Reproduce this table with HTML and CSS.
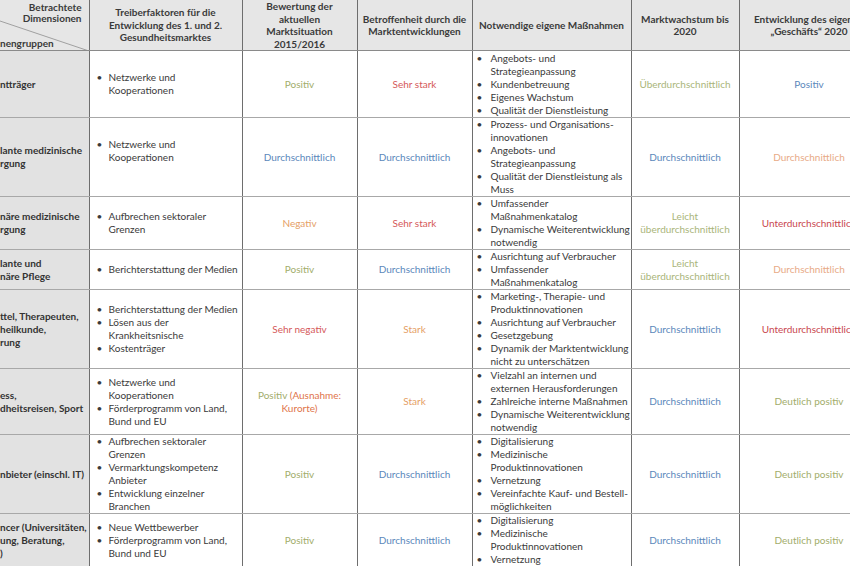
FILE: index.html
```html
<!DOCTYPE html>
<html lang="de">
<head>
<meta charset="utf-8">
<title>Marktanalyse Gesundheitsmarkt</title>
<link rel="stylesheet" href="styles.css">
</head>
<body>
<table class="matrix">
  <colgroup>
    <col class="c1"><col class="c2"><col class="c3"><col class="c4"><col class="c5"><col class="c6"><col class="c7">
  </colgroup>
  <thead>
    <tr class="head">
      <th class="corner">
        <div class="corner-box">
          <svg class="diag" width="89" height="50" viewBox="0 0 89 50"><line x1="0" y1="20" x2="89" y2="50" stroke="#a0a0a0" stroke-width="1"/></svg>
          <span class="dim">Betrachtete<br>Dimensionen</span>
          <span class="grp">nengruppen</span>
        </div>
      </th>
      <th>Treiberfaktoren für die<br>Entwicklung des 1. und 2.<br>Gesundheitsmarktes</th>
      <th>Bewertung der<br>aktuellen<br>Marktsituation<br>2015/2016</th>
      <th>Betroffenheit durch die<br>Marktentwicklungen</th>
      <th>Notwendige eigene Maßnahmen</th>
      <th>Marktwachstum bis<br>2020</th>
      <th class="last">Entwicklung des eigenen<br>„Geschäfts“ 2020</th>
    </tr>
  </thead>
  <tbody>
    <tr class="r1">
      <th class="grp-cell">ntträger</th>
      <td class="drv"><ul><li>Netzwerke und<br>Kooperationen</li></ul></td>
      <td class="val green">Positiv</td>
      <td class="val red">Sehr stark</td>
      <td class="act"><ul><li>Angebots- und<br>Strategieanpassung</li><li>Kundenbetreuung</li><li>Eigenes Wachstum</li><li>Qualität der Dienstleistung</li></ul></td>
      <td class="val lgreen">Überdurchschnittlich</td>
      <td class="val blue">Positiv</td>
    </tr>
    <tr class="r2">
      <th class="grp-cell">lante medizinische<br>rgung</th>
      <td class="drv raised"><ul><li>Netzwerke und<br>Kooperationen</li></ul></td>
      <td class="val blue">Durchschnittlich</td>
      <td class="val blue">Durchschnittlich</td>
      <td class="act"><ul><li>Prozess- und Organisations-<br>innovationen</li><li>Angebots- und<br>Strategieanpassung</li><li>Qualität der Dienstleistung als<br>Muss</li></ul></td>
      <td class="val blue">Durchschnittlich</td>
      <td class="val peach">Durchschnittlich</td>
    </tr>
    <tr class="r3">
      <th class="grp-cell">näre medizinische<br>rgung</th>
      <td class="drv"><ul><li>Aufbrechen sektoraler<br>Grenzen</li></ul></td>
      <td class="val orange">Negativ</td>
      <td class="val red">Sehr stark</td>
      <td class="act"><ul><li>Umfassender<br>Maßnahmenkatalog</li><li>Dynamische Weiterentwicklung<br>notwendig</li></ul></td>
      <td class="val lgreen">Leicht<br>überdurchschnittlich</td>
      <td class="val dred">Unterdurchschnittlich</td>
    </tr>
    <tr class="r4">
      <th class="grp-cell">lante und<br>näre Pflege</th>
      <td class="drv"><ul><li>Berichterstattung der Medien</li></ul></td>
      <td class="val green">Positiv</td>
      <td class="val blue">Durchschnittlich</td>
      <td class="act"><ul><li>Ausrichtung auf Verbraucher</li><li>Umfassender<br>Maßnahmenkatalog</li></ul></td>
      <td class="val lgreen">Leicht<br>überdurchschnittlich</td>
      <td class="val peach">Durchschnittlich</td>
    </tr>
    <tr class="r5">
      <th class="grp-cell">ttel, Therapeuten,<br>heilkunde,<br>rung</th>
      <td class="drv"><ul><li>Berichterstattung der Medien</li><li>Lösen aus der<br>Krankheitsnische</li><li>Kostenträger</li></ul></td>
      <td class="val red">Sehr negativ</td>
      <td class="val orange">Stark</td>
      <td class="act"><ul><li>Marketing-, Therapie- und<br>Produktinnovationen</li><li>Ausrichtung auf Verbraucher</li><li>Gesetzgebung</li><li>Dynamik der Marktentwicklung<br>nicht zu unterschätzen</li></ul></td>
      <td class="val blue">Durchschnittlich</td>
      <td class="val dred">Unterdurchschnittlich</td>
    </tr>
    <tr class="r6">
      <th class="grp-cell">ess,<br>dheitsreisen, Sport</th>
      <td class="drv"><ul><li>Netzwerke und<br>Kooperationen</li><li>Förderprogramm von Land,<br>Bund und EU</li></ul></td>
      <td class="val"><span class="green">Positiv</span> <span class="rust">(Ausnahme:<br>Kurorte)</span></td>
      <td class="val orange">Stark</td>
      <td class="act"><ul><li>Vielzahl an internen und<br>externen Herausforderungen</li><li>Zahlreiche interne Maßnahmen</li><li>Dynamische Weiterentwicklung<br>notwendig</li></ul></td>
      <td class="val blue">Durchschnittlich</td>
      <td class="val green">Deutlich positiv</td>
    </tr>
    <tr class="r7">
      <th class="grp-cell">nbieter (einschl. IT)</th>
      <td class="drv"><ul><li>Aufbrechen sektoraler<br>Grenzen</li><li>Vermarktungskompetenz<br>Anbieter</li><li>Entwicklung einzelner<br>Branchen</li></ul></td>
      <td class="val green">Positiv</td>
      <td class="val blue">Durchschnittlich</td>
      <td class="act"><ul><li>Digitalisierung</li><li>Medizinische<br>Produktinnovationen</li><li>Vernetzung</li><li>Vereinfachte Kauf- und Bestell-<br>möglichkeiten</li></ul></td>
      <td class="val blue">Durchschnittlich</td>
      <td class="val green">Deutlich positiv</td>
    </tr>
    <tr class="r8">
      <th class="grp-cell">ncer (Universitäten,<br>ung, Beratung,<br>)</th>
      <td class="drv"><ul><li>Neue Wettbewerber</li><li>Förderprogramm von Land,<br>Bund und EU</li></ul></td>
      <td class="val green">Positiv</td>
      <td class="val blue">Durchschnittlich</td>
      <td class="act"><ul><li>Digitalisierung</li><li>Medizinische<br>Produktinnovationen</li><li>Vernetzung</li></ul></td>
      <td class="val blue">Durchschnittlich</td>
      <td class="val green">Deutlich positiv</td>
    </tr>
  </tbody>
</table>
</body>
</html>
```
FILE: styles.css
```css
html, body {
  margin: 0;
  padding: 0;
  background: #ffffff;
  overflow: hidden;
}

body {
  width: 850px;
  height: 566px;
  font-family: Lato, "Open Sans", sans-serif;
  font-size: 10px;
  line-height: 13px;
  color: #3a3a3a;
}

.matrix {
  border-collapse: collapse;
  table-layout: fixed;
  width: 879px;
}

.c1 { width: 89px; }
.c2 { width: 153px; }
.c3 { width: 115px; }
.c4 { width: 115px; }
.c5 { width: 159px; }
.c6 { width: 108px; }
.c7 { width: 140px; }

.matrix th,
.matrix td {
  padding: 0;
  border-left: 1px solid #6e6e6e;
  border-right: 1px solid #6e6e6e;
  border-top: 1px solid #a8a8a8;
  border-bottom: 1px solid #a8a8a8;
  vertical-align: middle;
}

.matrix th:first-child,
.matrix td:first-child {
  border-left: none;
}

.head th {
  height: 49px;
  background: #e6e6e6;
  font-weight: 700;
  color: #3a3a3a;
  text-align: center;
  line-height: 12.5px;
  border-top: none;
  border-bottom: 1px solid #8a8a8a;
}

.head th.last {
  white-space: nowrap;
  text-align: center;
}

.corner {
  padding: 0;
}

.corner-box {
  position: relative;
  height: 49px;
  display: flex;
  flex-direction: column;
  justify-content: space-between;
  overflow: hidden;
}

.diag {
  position: absolute;
  left: 0;
  top: 0;
}

.dim {
  text-align: right;
  padding-right: 7px;
  padding-top: 1px;
  line-height: 11.5px;
}

.grp {
  text-align: left;
  padding-bottom: 0;
  line-height: 13px;
}

.grp-cell {
  background: #e2e2e2;
  font-weight: 700;
  text-align: left;
  white-space: nowrap;
  overflow: hidden;
  color: #333333;
}

.r1 { height: 67px; }
.r2 { height: 77px; }
.r3 { height: 53px; }
.r4 { height: 40px; }
.r5 { height: 79px; }
.r6 { height: 65px; }
.r7 { height: 78px; }
.r8 { height: 52px; }

ul {
  list-style: none;
  margin: 0;
  padding: 0;
}

li {
  display: grid;
  white-space: nowrap;
}

li::before {
  content: "•";
  color: #3a3a3a;
}

.drv li {
  grid-template-columns: 12px 1fr;
  padding-left: 7px;
}

.act li {
  grid-template-columns: 14px 1fr;
  padding-left: 4px;
}

.drv.raised ul {
  padding-bottom: 12px;
}

.val {
  text-align: center;
}

.green { color: #a2ad6b; }
.lgreen { color: #aab57a; }
.blue { color: #5b88bb; }
.red { color: #d5595a; }
.dred { color: #c9474f; }
.orange { color: #e5a066; }
.peach { color: #e8aa86; }
.rust { color: #e0744a; }
```
